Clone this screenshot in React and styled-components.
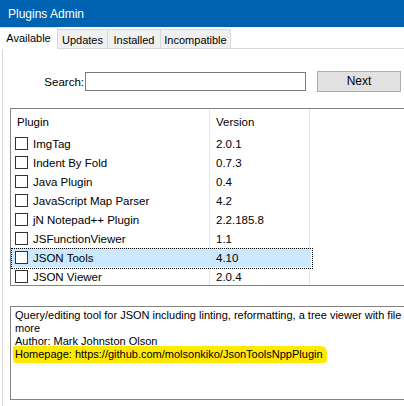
import React from 'react';
import styled, { createGlobalStyle } from 'styled-components';

const GlobalStyle = createGlobalStyle`
  html, body {
    margin: 0;
    padding: 0;
    background: #ffffff;
  }
  * {
    box-sizing: border-box;
  }
`;

const Window = styled.div`
  width: 404px;
  height: 406px;
  overflow: hidden;
  background: #ffffff;
  font-family: 'Liberation Sans', Arial, sans-serif;
  font-size: 11.5px;
  color: #000;
  display: flex;
  flex-direction: column;
`;

const TitleBar = styled.div`
  height: 27px;
  flex: none;
  background: #0063b1;
  color: #ffffff;
  font-size: 12px;
  display: flex;
  align-items: center;
  padding-left: 8px;
`;

const TabStrip = styled.div`
  display: flex;
  align-items: flex-start;
  height: 22px;
  flex: none;
  border-bottom: 1px solid #d9d9d9;
`;

const Tab = styled.div`
  width: ${(p) => p.$w}px;
  height: ${(p) => (p.$active ? '22px' : '19px')};
  margin-top: ${(p) => (p.$active ? '0' : '2px')};
  display: flex;
  align-items: center;
  justify-content: center;
  font-size: 11px;
  background: ${(p) => (p.$active ? '#ffffff' : '#f0f0f0')};
  border: 1px solid #d9d9d9;
  border-bottom: none;
  border-left: ${(p) => (p.$first ? 'none' : '1px solid #d9d9d9')};
  margin-left: ${(p) => (p.$first ? '0' : '-1px')};
  position: relative;
  z-index: ${(p) => (p.$active ? 1 : 0)};
  ${(p) => (p.$active ? 'padding-bottom: 2px;' : 'padding-top: 1px;')}
`;

const Pane = styled.div`
  flex: 1;
  margin-left: 2px;
  border-left: 1px solid #d9d9d9;
  display: flex;
  flex-direction: column;
  padding-left: 7px;
`;

const SearchRow = styled.div`
  display: flex;
  align-items: center;
  margin-top: 21px;
  height: 22px;
`;

const SearchLabel = styled.label`
  width: 75px;
  text-align: right;
  padding-right: 1px;
  padding-top: 1px;
`;

const SearchInput = styled.div`
  width: 221px;
  height: 19px;
  border: 1px solid #7a7a7a;
  background: #fff;
`;

const Button = styled.div`
  width: 84px;
  height: 21px;
  margin-left: 11px;
  background: #e1e1e1;
  border: 1px solid #adadad;
  display: flex;
  align-items: center;
  justify-content: center;
  font-size: 12px;
`;

const ListBox = styled.div`
  margin-top: 16px;
  width: 420px;
  height: 178px;
  border: 1px solid #828282;
  overflow: hidden;
  flex: none;
`;

const Row = styled.div`
  display: grid;
  grid-template-columns: 199px 100px 1fr;
  height: ${(p) => (p.$header ? '25px' : '19px')};
  align-items: center;
  position: relative;
  background: ${(p) => (p.$selected ? 'linear-gradient(90deg, #cce8ff 300px, transparent 300px)' : 'transparent')};
  ${(p) =>
    p.$selected
      ? `&::after {
          content: '';
          position: absolute;
          left: 0;
          top: 0;
          width: 300px;
          height: 19px;
          border: 1px dotted #000;
        }`
      : ''}
`;

const Cell = styled.div`
  height: 100%;
  display: flex;
  align-items: center;
  padding-left: ${(p) => p.$pad || 6}px;
  border-right: ${(p) => (p.$noline ? 'none' : '1px solid #e5e5e5')};
  white-space: nowrap;
`;

const Check = styled.span`
  width: 13px;
  height: 13px;
  border: 1px solid #333;
  background: #fff;
  margin-right: 5px;
  flex: none;
`;

const DescBox = styled.div`
  margin-top: 20px;
  width: 420px;
  height: 94px;
  flex: none;
  border: 1px solid #828282;
  padding: 2px 4px;
  font-family: 'Liberation Sans', Arial, sans-serif;
  font-size: 11px;
  line-height: 13px;
`;

const Line = styled.div`
  white-space: nowrap;
`;

const Highlight = styled.span`
  background: #ffe900;
  padding: 2px 4px 3px 2px;
  margin-left: -2px;
  border-radius: 2px 6px 4px 3px;
`;

const tabs = [
  ['Available', 58],
  ['Updates', 51],
  ['Installed', 54],
  ['Incompatible', 71],
];

const plugins = [
  ['ImgTag', '2.0.1'],
  ['Indent By Fold', '0.7.3'],
  ['Java Plugin', '0.4'],
  ['JavaScript Map Parser', '4.2'],
  ['jN Notepad++ Plugin', '2.2.185.8'],
  ['JSFunctionViewer', '1.1'],
  ['JSON Tools', '4.10'],
  ['JSON Viewer', '2.0.4'],
];

export default function App() {
  return (
    <Window>
      <GlobalStyle />
      <TitleBar>Plugins Admin</TitleBar>
      <TabStrip>
        {tabs.map(([label, w], i) => (
          <Tab key={label} $w={w} $active={i === 0} $first={i === 0}>
            {label}
          </Tab>
        ))}
      </TabStrip>
      <Pane>
        <SearchRow>
          <SearchLabel>Search:</SearchLabel>
          <SearchInput />
          <Button>Next</Button>
        </SearchRow>
        <ListBox>
          <Row $header>
            <Cell>Plugin</Cell>
            <Cell>Version</Cell>
            <Cell $noline />
          </Row>
          {plugins.map(([name, ver]) => (
            <Row key={name} $selected={name === 'JSON Tools'}>
              <Cell $pad={4}>
                <Check />
                {name}
              </Cell>
              <Cell>{ver}</Cell>
              <Cell $noline />
            </Row>
          ))}
        </ListBox>
        <DescBox>
          <Line>Query/editing tool for JSON including linting, reformatting, a tree viewer with file</Line>
          <Line>more</Line>
          <Line>Author: Mark Johnston Olson</Line>
          <Line>
            <Highlight>Homepage: https://github.com/molsonkiko/JsonToolsNppPlugin</Highlight>
          </Line>
        </DescBox>
      </Pane>
    </Window>
  );
}
